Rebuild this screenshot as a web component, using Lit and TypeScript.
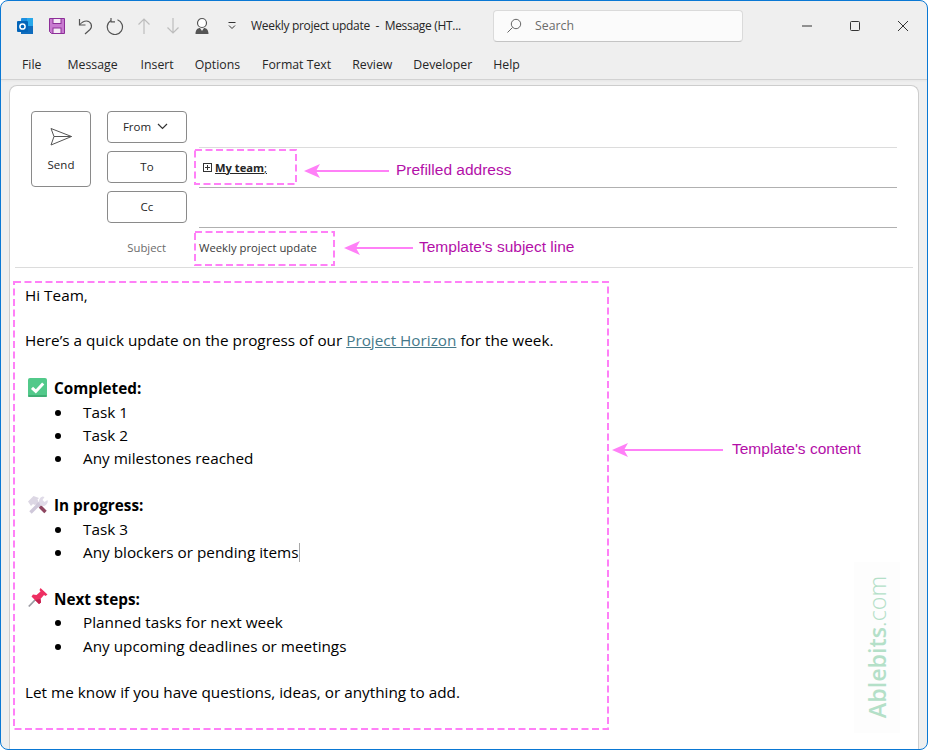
import { LitElement, html, css, svg } from 'lit';
import { customElement } from 'lit/decorators.js';

const menus = ['File', 'Message', 'Insert', 'Options', 'Format Text', 'Review', 'Developer', 'Help'];

const checkIcon = html`<svg class="emoji" viewBox="0 0 20 20"><rect x="0" y="0" width="19" height="19" rx="2" fill="#52c98a"/><rect x="0" y="17" width="19" height="2" rx="1" fill="#3fae74"/><path d="M4 9.800l3.800 3.600 7.400-8" fill="none" stroke="#fff" stroke-width="3"/></svg>`;
const toolsIcon = html`<svg class="emoji" viewBox="0 0 20 20">
  <path d="M7 6.500l10.500 10.500" stroke="#d5cfdd" stroke-width="3.200"/>
  <path d="M12 11.500l5.500 5.500" stroke="#8e4660" stroke-width="3.400"/>
  <path d="M2.500 17.500L13 7" stroke="#cfc8da" stroke-width="3.400"/>
  <path d="M11.500 8.500a5 5 0 0 1 3-7l2 .5-2 3 2 2 3-2 .3 2a5 5 0 0 1-7 3.500z" fill="#e0dbe8"/>
  <path d="M0 6.500L5.500 1l5.500 2-1.500 1.500 1 2-3.500 3.500-2-1-2 2z" fill="#dcd7e4"/>
</svg>`;
const pinIcon = html`<svg class="emoji" viewBox="0 0 20 20"><path d="M7.500 11.500L.8 18.500" stroke="#9b9ba3" stroke-width="1.800"/><path d="M12.500 0L19.500 6.500 17.500 8 16 7l-3.500 4 .5 3.500-2 1.500L3.500 8.500 5 6.500l3.500.5 4-3.500-1-1.500z" fill="#ee2f62"/><path d="M12.500 11l.5 3.500-2 1.500-4-4z" fill="#c2214e"/></svg>`;

@customElement('app-root')
export class AppRoot extends LitElement {
  static styles = css`
    :host {
      display: block;
      width: 928px;
      height: 750px;
      position: relative;
      overflow: hidden;
      font-family: 'Open Sans', 'Noto Sans', sans-serif;
    }
    .window {
      box-sizing: border-box;
      width: 928px;
      height: 750px;
      background: #efefef;
      border: 1px solid #0a78d4;
      border-radius: 8px;
      display: flex;
      flex-direction: column;
      overflow: hidden;
    }
    .title-bar {
      height: 49px;
      display: flex;
      align-items: center;
      padding-left: 15px;
      flex: none;
    }
    .qa {
      display: flex;
      align-items: center;
      width: 235px;
    }
    .qa svg { flex: none; display: block; }
    .doc-title {
      font-size: 12px;
      letter-spacing: -0.3px;
      color: #262626;
      width: 242px;
      white-space: pre;
    }
    .search {
      box-sizing: border-box;
      width: 250px;
      height: 32px;
      background: #fbfbfb;
      border: 1px solid #dadada;
      border-bottom-color: #c4c4c4;
      border-radius: 4px;
      display: flex;
      align-items: center;
      gap: 13px;
      padding-left: 12px;
      font-size: 12.3px;
      color: #6b6b6b;
    }
    .win-btns {
      display: flex;
      margin-left: auto;
    }
    .win-btns div {
      width: 48px;
      height: 32px;
      display: flex;
      align-items: center;
      justify-content: center;
    }
    .menu {
      height: 29px;
      display: flex;
      align-items: center;
      padding-left: 21px;
      font-size: 12.3px;
      color: #262626;
      flex: none;
      border-bottom: 1px solid #d2d2d2;
      box-shadow: 0 1px 2px rgba(0, 0, 0, 0.04);
    }
    .menu span { margin-right: 21px; }
    .menu span:first-child { margin-right: 26px; }
    .menu span:nth-child(2) { margin-right: 23px; }
    .menu span:nth-child(4) { margin-right: 22px; }
    .card {
      flex: 1;
      background: #fff;
      margin: 5px 8px 0 8px;
      border: 1px solid #cdcdcd;
      border-bottom: none;
      border-radius: 8px 8px 0 0;
      display: flex;
      flex-direction: column;
      position: relative;
    }
    .compose {
      display: flex;
      gap: 16px;
      padding: 25px 0 0 21px;
      box-sizing: border-box;
    }
    .send {
      box-sizing: border-box;
      width: 60px;
      height: 76px;
      border: 1px solid #8a8a8a;
      border-radius: 4px;
      display: flex;
      flex-direction: column;
      align-items: center;
      gap: 10px;
      padding-top: 15px;
      font-size: 11.5px;
      color: #262626;
    }
    .fields { flex: 1; display: flex; flex-direction: column; }
    .row {
      display: flex;
      height: 40px;
      box-sizing: border-box;
    }
    .row:last-child { height: 37px; }
    .btn {
      box-sizing: border-box;
      width: 80px;
      height: 32px;
      padding-bottom: 2px;
      border: 1px solid #8a8a8a;
      border-radius: 4px;
      display: flex;
      align-items: center;
      justify-content: center;
      gap: 6px;
      font-size: 11.5px;
      color: #262626;
      flex: none;
    }
    .btn.from { padding-right: 3px; }
    .field {
      margin-left: 12px;
      width: 698px;
      height: 37px;
      border-bottom: 1px solid #b0b0b0;
      display: flex;
      align-items: center;
      box-sizing: border-box;
      font-size: 11.5px;
      color: #262626;
    }
    .row:first-child .field { border-bottom-color: #dcdcdc; }
    .row:nth-child(2) .field,
    .row:nth-child(3) .field { margin-top: -4px; height: 41px; }
    .recipient {
      display: flex;
      align-items: center;
      gap: 3px;
      padding-left: 4px;
      font-size: 11.2px;
    }
    .recipient span { text-decoration: underline; }
    .recipient b { font-weight: 700; }
    .subject-row {
      display: flex;
      align-items: center;
      height: 40px;
      margin: 0 5px;
      border-bottom: 1px solid #dcdcdc;
      box-sizing: border-box;
      font-size: 11.3px;
      flex: none;
    }
    .subject-label { width: 151px; text-align: right; color: #6b6b6b; }
    .subject-text { margin-left: 33px; color: #3a3a3a; }
    .body {
      padding: 15.500px 0 0 15px;
      font-size: 15.3px;
      line-height: 23.4px;
      color: #000;
    }
    .body p { margin: 0; }
    .blank { height: 23.4px; }
    .blank.tight { height: 22px; }
    .blank.wide { height: 24.800px; }
    .body a { color: #46798a; text-decoration: underline; }
    .head {
      display: flex;
      align-items: center;
      font-weight: 700;
      gap: 6px;
      padding-left: 3px;
    }
    .emoji { width: 20px; height: 20px; flex: none; margin-top: -3px; margin-bottom: -1px; }
    ul { margin: 0; padding: 0 0 0 58px; list-style: none; }
    li { position: relative; }
    li::before {
      content: '';
      position: absolute;
      left: -28px;
      top: 9px;
      width: 6px;
      height: 6px;
      border-radius: 50%;
      background: #000;
    }
    .caret {
      display: inline-block;
      width: 1px;
      height: 19px;
      background: #a8a8a8;
      vertical-align: -4px;
    }
    .mark {
      position: absolute;
      left: 854px;
      top: 562px;
      width: 46px;
      height: 171px;
      background: #fdfdfd;
      display: flex;
      align-items: center;
      justify-content: center;
    }
    .mark span {
      writing-mode: vertical-rl;
      transform: rotate(180deg);
      font-size: 23.300px;
      line-height: 30px;
      color: #b4e0c8;
      white-space: nowrap;
    }
    .mark b { font-weight: 600; }
    .mark i { font-style: normal; font-weight: 300; }
    .overlay {
      position: absolute;
      left: 0;
      top: 0;
      width: 928px;
      height: 750px;
      pointer-events: none;
    }
    .overlay text {
      font-family: 'Liberation Sans', Arial, sans-serif;
      font-size: 15.500px;
      fill: #b30fa8;
    }
    .overlay rect { fill: none; stroke: #ff80f7; stroke-width: 2; stroke-dasharray: 7 3.5; }
    .overlay line { stroke: #ff80f7; stroke-width: 2; }
    .overlay polygon { fill: #ff80f7; }
  `;

  arrow(x1: number, x2: number, y: number) {
    return svg`<line x1=${x1 + 10} y1=${y} x2=${x2} y2=${y}></line><polygon points="${x1},${y} ${x1 + 16},${y - 7} ${x1 + 12},${y} ${x1 + 16},${y + 7}"></polygon>`;
  }

  render() {
    return html`
      <div class="window">
        <div class="title-bar">
          <div class="qa">
            <svg width="20" height="20" viewBox="0 0 20 20" style="margin-right:12px">
              <rect x="5" y="2" width="12" height="16" rx="1" fill="#1d8fe0"/>
              <rect x="11" y="2" width="6" height="8" fill="#28a8ea"/>
              <rect x="5" y="10" width="12" height="8" fill="#0f6cbd"/>
              <rect x="1" y="5" width="11" height="11" rx="1" fill="#0364b8"/>
              <circle cx="6.500" cy="10.500" r="2.600" fill="none" stroke="#fff" stroke-width="1.500"/>
            </svg>
            <svg width="18" height="18" viewBox="0 0 18 18" style="margin-right:11px">
              <path d="M1.500 1.500h15v15h-13l-2-2z" fill="#c87ad0" stroke="#8d2f98" stroke-width="1"/>
              <rect x="5" y="1.500" width="8" height="5" fill="#f5eaf6" stroke="#8d2f98"/>
              <rect x="5" y="11" width="8" height="5.500" fill="#f5eaf6" stroke="#8d2f98"/>
            </svg>
            <svg width="18" height="18" viewBox="0 0 18 18" style="margin-right:11px" fill="none" stroke="#555" stroke-width="1.200">
              <path d="M2.500 2v6h6"/><path d="M2.500 8c2-2.500 4-4 7-4a5 5 0 0 1 3.500 8.500L8 17"/>
            </svg>
            <svg width="18" height="18" viewBox="0 0 18 18" style="margin-right:12px" fill="none" stroke="#555" stroke-width="1.200">
              <path d="M11.500 2.800A7.600 7.600 0 1 1 5 3.400"/><path d="M5 1v3.800h4"/>
            </svg>
            <svg width="16" height="18" viewBox="0 0 16 18" style="margin-right:13px" fill="none" stroke="#bdbdbd" stroke-width="1.200">
              <path d="M8 17V2M2.500 7.500L8 2l5.500 5.500"/>
            </svg>
            <svg width="16" height="18" viewBox="0 0 16 18" style="margin-right:13px" fill="none" stroke="#bdbdbd" stroke-width="1.200">
              <path d="M8 1v15M2.500 10.500L8 16l5.500-5.500"/>
            </svg>
            <svg width="16" height="18" viewBox="0 0 16 18" style="margin-right:17px">
              <circle cx="8" cy="6" r="4.500" fill="#fff" stroke="#555" stroke-width="1.200"/>
              <path d="M1.500 17c0-4 2-6 4.500-6l2 3 2-3c2.500 0 4.500 2 4.500 6z" fill="#555"/>
            </svg>
            <svg width="10" height="10" viewBox="0 0 10 10" fill="none" stroke="#333" stroke-width="1">
              <path d="M1.500 1.500h7M2 4.500l3 3 3-3"/>
            </svg>
          </div>
          <div class="doc-title">Weekly project update  -  Message (HT...</div>
          <div class="search">
            <svg width="16" height="16" viewBox="0 0 16 16" fill="none" stroke="#666" stroke-width="1">
              <circle cx="10" cy="6" r="4.700"/><path d="M6.600 9.400L1.500 14.500"/>
            </svg>
            <span>Search</span>
          </div>
          <div class="win-btns">
            <div><svg width="12" height="12" viewBox="0 0 12 12"><path d="M1 6h10" stroke="#333" stroke-width="1"/></svg></div>
            <div><svg width="12" height="12" viewBox="0 0 12 12"><rect x="1.500" y="1.500" width="9" height="9" rx="1" fill="none" stroke="#333"/></svg></div>
            <div><svg width="12" height="12" viewBox="0 0 12 12"><path d="M1 1l10 10M11 1L1 11" stroke="#333" stroke-width="1"/></svg></div>
          </div>
        </div>
        <div class="menu">${menus.map((m) => html`<span>${m}</span>`)}</div>
        <div class="card">
          <div class="compose">
            <div class="send">
              <svg width="24" height="20" viewBox="0 0 24 20" fill="none" stroke="#555" stroke-width="1">
                <path d="M2 1.500L22.500 9.500 2 18l3-8.500z M5 9.500h17.500"/>
              </svg>
              <span>Send</span>
            </div>
            <div class="fields">
              <div class="row">
                <div class="btn from">From
                  <svg width="11" height="7" viewBox="0 0 11 7" fill="none" stroke="#333" stroke-width="1.200"><path d="M1 1l4.500 4.500L10 1"/></svg>
                </div>
                <div class="field"></div>
              </div>
              <div class="row">
                <div class="btn">To</div>
                <div class="field">
                  <div class="recipient">
                    <svg width="9" height="9" viewBox="0 0 9 9" fill="none" stroke="#333" stroke-width="1"><rect x=".5" y=".5" width="8" height="8"/><path d="M2 4.500h5M4.500 2v5"/></svg>
                    <span><b>My team</b>;</span>
                  </div>
                </div>
              </div>
              <div class="row">
                <div class="btn">Cc</div>
                <div class="field"></div>
              </div>
            </div>
          </div>
          <div class="subject-row">
            <div class="subject-label">Subject</div>
            <div class="subject-text">Weekly project update</div>
          </div>
          <div class="body">
            <p>Hi Team,</p>
            <div class="blank tight"></div>
            <p>Here’s a quick update on the progress of our <a>Project Horizon</a> for the week.</p>
            <div class="blank wide"></div>
            <div class="head">${checkIcon}<span>Completed:</span></div>
            <ul><li>Task 1</li><li>Task 2</li><li>Any milestones reached</li></ul>
            <div class="blank"></div>
            <div class="head">${toolsIcon}<span>In progress:</span></div>
            <ul><li>Task 3</li><li>Any blockers or pending items<span class="caret"></span></li></ul>
            <div class="blank"></div>
            <div class="head">${pinIcon}<span>Next steps:</span></div>
            <ul><li>Planned tasks for next week</li><li>Any upcoming deadlines or meetings</li></ul>
            <div class="blank"></div>
            <p>Let me know if you have questions, ideas, or anything to add.</p>
          </div>
        </div>
      </div>
      <div class="mark"><span><b>Ablebits</b><i>.com</i></span></div>
      <svg class="overlay" viewBox="0 0 928 750">
        <rect x="195" y="150" width="101" height="34"></rect>
        <rect x="195" y="232" width="139" height="33"></rect>
        <rect x="14" y="282" width="594" height="447"></rect>
        ${this.arrow(304, 389, 171)}
        ${this.arrow(344, 413, 248)}
        ${this.arrow(612, 723, 450)}
        <text x="396" y="175">Prefilled address</text>
        <text x="419" y="252">Template's subject line</text>
        <text x="732" y="454">Template's content</text>
      </svg>
    `;
  }
}
